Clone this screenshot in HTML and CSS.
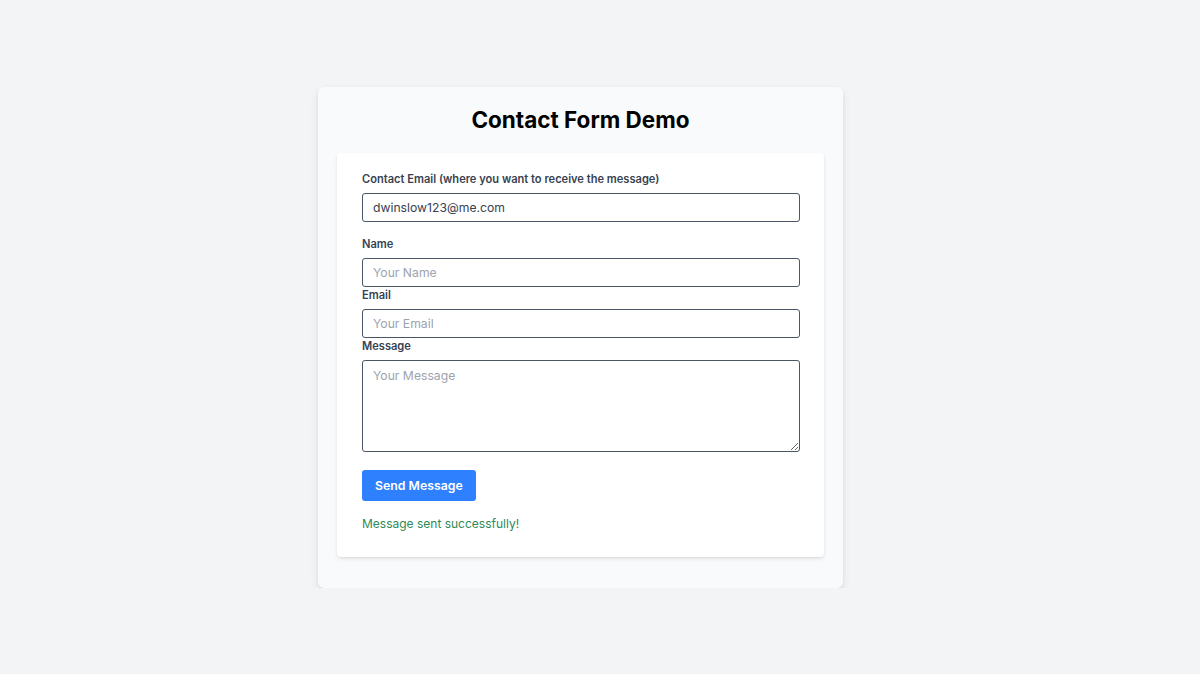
FILE: index.html
```html
<!DOCTYPE html>
<html lang="en">
<head>
<meta charset="utf-8">
<title>Contact Form Demo</title>
<link rel="stylesheet" href="styles.css">
</head>
<body>
<main class="page">
  <section class="shell">
    <h1 class="title">Contact Form Demo</h1>
    <form class="card">
      <div class="field field-first">
        <label class="label">Contact Email (where you want to receive the message)</label>
        <input class="input" type="email" value="dwinslow123@me.com">
      </div>
      <div class="field">
        <label class="label">Name</label>
        <input class="input" type="text" placeholder="Your Name">
      </div>
      <div class="field">
        <label class="label">Email</label>
        <input class="input" type="email" placeholder="Your Email">
      </div>
      <div class="field">
        <label class="label">Message</label>
        <textarea class="input textarea" placeholder="Your Message"></textarea>
      </div>
      <button class="button" type="button">Send Message</button>
      <p class="status">Message sent successfully!</p>
    </form>
  </section>
</main>
</body>
</html>
```

FILE: styles.css
```css
* { box-sizing: border-box; }
html, body { margin: 0; padding: 0; }
body {
  background: #f3f4f6;
  font-family: Inter, "Noto Sans", sans-serif;
  color: #111827;
}
.page {
  display: flex;
  justify-content: center;
  padding-top: 87px;
  padding-right: 39px;
}
.shell {
  width: 525px;
  background: #f9fafb;
  border-radius: 6px;
  box-shadow: 0 4px 10px rgba(0,0,0,0.08), 0 1px 3px rgba(0,0,0,0.06);
  padding: 18px 19px 31px;
}
.title {
  margin: 0 0 18px;
  text-align: center;
  font-size: 22.5px;
  font-weight: 700;
  line-height: 30px;
  color: #000;
}
.card {
  background: #fff;
  border-radius: 4px;
  box-shadow: 0 2px 4px rgba(0,0,0,0.08), 0 1px 2px rgba(0,0,0,0.06);
  padding: 18px 24px 24px 25px;
  display: flex;
  flex-direction: column;
}
.field { display: flex; flex-direction: column; }
.field-first { margin-bottom: 14px; }
.label {
  font-size: 11.1px;
  font-weight: 600;
  color: #374151;
  line-height: 16px;
  margin-bottom: 6px;
}
.input {
  width: 100%;
  height: 29px;
  border: 1px solid #4b5563;
  border-radius: 3px;
  padding: 0 10px;
  font-family: Inter, "Noto Sans", sans-serif;
  font-size: 12.2px;
  color: #374151;
  background: #fff;
  outline: none;
}
.input::placeholder { color: #9ca3af; }
.textarea {
  height: 92px;
  padding: 7px 10px;
  resize: vertical;
}
.button {
  align-self: flex-start;
  margin-top: 18px;
  background: #2f80ff;
  color: #fff;
  border: none;
  border-radius: 3px;
  height: 31px;
  padding: 0 13px;
  font-family: Inter, "Noto Sans", sans-serif;
  font-size: 12.3px;
  font-weight: 600;
}
.status {
  margin: 14px 0 0;
  font-size: 12px;
  color: #2f8a57;
  line-height: 18px;
}
```
